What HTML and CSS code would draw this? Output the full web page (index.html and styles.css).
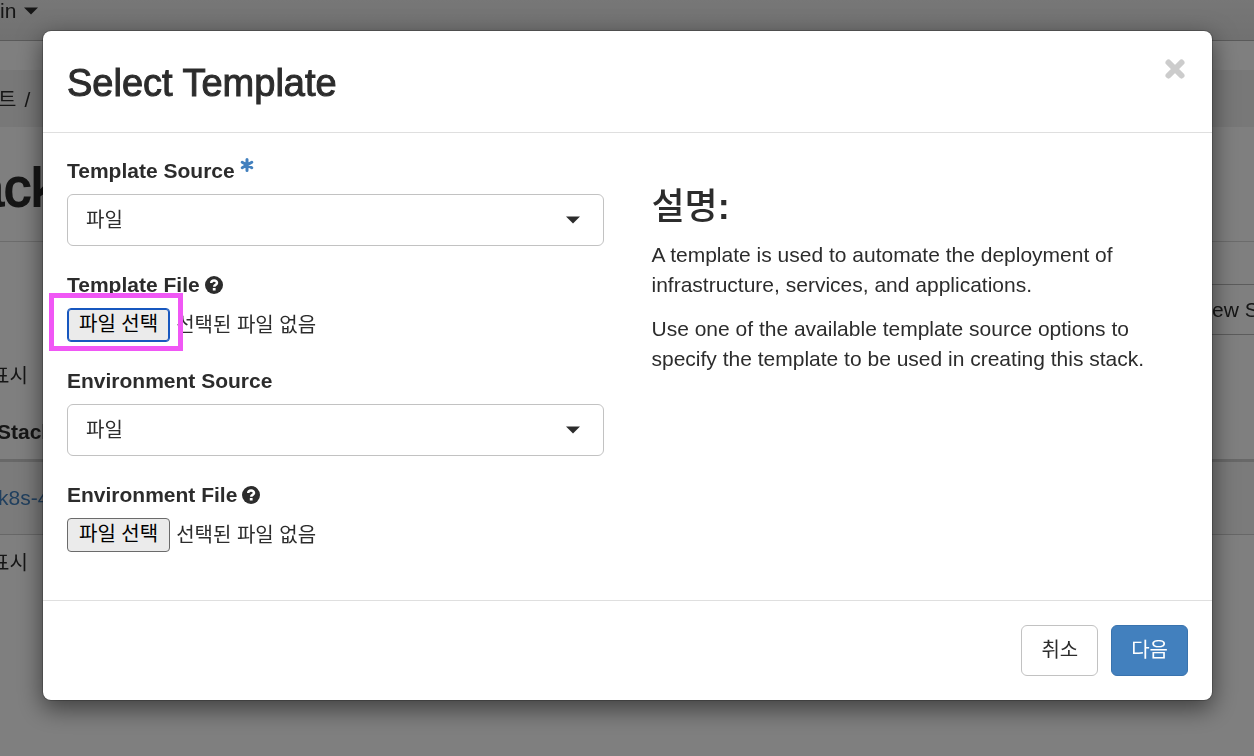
FILE: index.html
```html
<!DOCTYPE html>
<html lang="ko">
<head>
<meta charset="utf-8">
<meta name="viewport" content="width=device-width, initial-scale=1">
<title>Select Template</title>
<link rel="stylesheet" href="styles.css">
</head>
<body>
<div class="page" aria-hidden="true">
  <div class="navbar"><span>in</span><svg class="caret" viewBox="0 0 14 8"><path d="M0 .5h14L7 7.5z"/></svg></div>
  <div class="breadcrumb"><span class="ko">트</span><span>/</span></div>
  <div class="page-title">ack</div>
  <div class="toolbar"><div class="toolbar-button">ew Stack</div></div>
  <div class="count ko">표시</div>
  <div class="table-head">Stack</div>
  <div class="table-row">k8s-4</div>
  <div class="count ko">표시</div>
</div>

<div class="overlay">
  <form class="modal" role="dialog" aria-labelledby="modal-title">
    <header class="modal-header">
      <h1 id="modal-title" class="modal-title">Select Template</h1>
      <button class="close" type="button" aria-label="닫기">
        <svg viewBox="0 0 22 22"><path d="M4.500 4.500l13 13M17.500 4.500l-13 13"/></svg>
      </button>
    </header>

    <div class="modal-body">
      <div class="fields">
        <div class="field">
          <label class="label" for="template-source">Template Source
            <svg class="required" viewBox="0 0 14 14"><path d="M7 1.500v11M2.200 4.200l9.600 5.600M11.800 4.200L2.200 9.800"/></svg>
          </label>
          <div class="select">
            <select id="template-source" class="select-input"><option>파일</option></select>
            <svg class="caret" viewBox="0 0 14 8"><path d="M0 .5h14L7 7.500z"/></svg>
          </div>
        </div>
        <div class="field">
          <label class="label" for="template-file">Template File
            <svg class="help" viewBox="0 0 18 18"><circle cx="9" cy="9" r="9"/><path d="M6.200 7c.2-3.400 5.900-3.200 5.800 0 0 2-2.800 1.800-2.800 3.700"/><rect x="7.800" y="12" width="2.800" height="2.500"/></svg>
          </label>
          <div class="file">
            <input id="template-file" class="file-input" type="file">
            <label class="file-button file-button-active" for="template-file">파일 선택<span class="highlight"></span></label>
            <span>선택된 파일 없음</span>
          </div>
        </div>
        <div class="field">
          <label class="label" for="environment-source">Environment Source</label>
          <div class="select">
            <select id="environment-source" class="select-input"><option>파일</option></select>
            <svg class="caret" viewBox="0 0 14 8"><path d="M0 .5h14L7 7.500z"/></svg>
          </div>
        </div>
        <div class="field">
          <label class="label" for="environment-file">Environment File
            <svg class="help" viewBox="0 0 18 18"><circle cx="9" cy="9" r="9"/><path d="M6.200 7c.2-3.400 5.900-3.200 5.800 0 0 2-2.800 1.800-2.800 3.700"/><rect x="7.800" y="12" width="2.800" height="2.500"/></svg>
          </label>
          <div class="file">
            <input id="environment-file" class="file-input" type="file">
            <label class="file-button" for="environment-file">파일 선택</label>
            <span>선택된 파일 없음</span>
          </div>
        </div>
      </div>

      <div class="description">
        <h2 class="description-title">설명<b>:</b></h2>
        <p>A template is used to automate the deployment of infrastructure, services, and applications.</p>
        <p>Use one of the available template source options to specify the template to be used in creating this stack.</p>
      </div>
    </div>

    <footer class="modal-footer">
      <button class="button" type="button">취소</button>
      <button class="button button-primary" type="submit">다음</button>
    </footer>
  </form>
</div>
</body>
</html>
```
FILE: styles.css
```css
* { box-sizing: border-box; }

body {
  margin: 0;
  min-height: 100vh;
  overflow: hidden;
  background: #fff;
  color: #2c2c2c;
  font: 21px/30px "Liberation Sans", "Noto Sans CJK KR", sans-serif;
}

.ko { font-size: 20px; }

.caret { width: 14px; height: 8px; fill: currentColor; }

/* Page behind the dialog */
.page { position: fixed; inset: 0; overflow: hidden; }
.navbar {
  display: flex;
  align-items: center;
  gap: 8px;
  height: 41px;
  padding-bottom: 18px;
  background: linear-gradient(#eeeeee, #e2e2e2);
  border-bottom: 1px solid #b4b4b4;
}
.breadcrumb {
  display: flex;
  align-items: center;
  gap: 8px;
  height: 57px;
  padding-top: 2px;
  margin-top: 29px;
  margin-left: -2px;
  background: #f1f1f1;
}
.page-title {
  height: 115px;
  padding-top: 30px;
  margin-left: -26px;
  border-bottom: 1px solid #d8d8d8;
  font-size: 54px;
  line-height: 60px;
  -webkit-text-stroke: 2px currentColor;
}
.toolbar { display: flex; justify-content: flex-end; margin-top: 42px; }
.toolbar-button {
  width: 80px;
  height: 51px;
  margin-right: -37px;
  padding-top: 10px;
  border: 1px solid #b8b8b8;
  white-space: nowrap;
}
.count { margin-left: -9px; height: 82px; padding-top: 26px; }
.table-head {
  height: 45px;
  margin-left: -3px;
  border-bottom: 3px solid #d0d0d0;
  font-weight: bold;
}
.table-row {
  height: 73px;
  padding-top: 21px;
  margin-left: -2px;
  border-bottom: 1px solid #cfcfcf;
  background: #f6f6f6;
  color: #4280be;
}
.table-row + .count { padding-top: 13px; }

/* Dialog */
.overlay {
  position: fixed;
  inset: 0;
  padding: 30px 41px 0 42px;
  overflow: auto;
  background: rgba(0, 0, 0, .5);
}
.modal {
  border: 1px solid rgba(0, 0, 0, .2);
  border-radius: 9px;
  background: #fff;
  background-clip: padding-box;
  box-shadow: 0 8px 24px rgba(0, 0, 0, .5);
}
.modal-header {
  display: flex;
  justify-content: space-between;
  align-items: flex-start;
  padding: 26px 24px 22px;
  border-bottom: 1px solid #dfdfdf;
}
.modal-title {
  margin: 0;
  font-size: 38px;
  line-height: 53px;
  font-weight: normal;
  -webkit-text-stroke: 1px currentColor;
}
.close {
  display: flex;
  margin: 1px 2px 0 0;
  padding: 0;
  border: 0;
  background: none;
}
.close svg { width: 22px; height: 22px; fill: none; stroke: #ccc; stroke-width: 6; stroke-linecap: round; }

.modal-body {
  display: grid;
  grid-template-columns: 1fr 1fr;
  gap: 48px;
  padding: 23px 24px 24px;
}
.field { margin-bottom: 24px; }
.label { display: flex; align-items: center; gap: 5px; margin-bottom: 8px; font-weight: bold; }
.required { width: 14px; height: 14px; margin-bottom: 12px; stroke: #4280be; stroke-width: 3; stroke-linecap: round; fill: none; }
.help { width: 18px; height: 18px; fill: #2c2c2c; }
.help path { fill: none; stroke: #fff; stroke-width: 2.5; }
.help rect { fill: #fff; }

.select { display: grid; align-items: center; }
.select > * { grid-area: 1 / 1; }
.select .caret { justify-self: end; margin-right: 24px; pointer-events: none; }
.select-input {
  appearance: none;
  width: 100%;
  height: 52px;
  padding: 0 48px 0 18px;
  border: 1px solid #c2c2c2;
  border-radius: 6px;
  background: #fff;
  color: inherit;
  font: inherit;
  font-size: 20px;
}

.file { display: flex; align-items: center; gap: 6px; font-size: 20px; }
.file-input { position: absolute; width: 1px; height: 1px; opacity: 0; }
.file-button {
  position: relative;
  height: 34px;
  padding: 0 11px;
  border: 1px solid #6b6b6b;
  border-radius: 4px;
  background: #ebebeb;
  color: #000;
}
.file-button-active { border-color: #1757bf; box-shadow: inset 0 0 0 1px #1757bf; }
.highlight {
  position: absolute;
  inset: -16px -14px -10px -19px;
  border: 5px solid #f057f5;
}

.description-title {
  margin: 31px 0 13px;
  font-size: 36px;
  line-height: 40px;
  font-weight: 500;
}
.description p { margin: 0 0 14px; }

.modal-footer {
  display: flex;
  justify-content: flex-end;
  gap: 13px;
  padding: 24px;
  border-top: 1px solid #dfdfdf;
}
.button {
  height: 51px;
  padding: 0 19px 2px;
  border: 1px solid #c2c2c2;
  border-radius: 6px;
  background: #fff;
  color: inherit;
  font: inherit;
  font-size: 20px;
}
.button-primary { border-color: #3973ae; background: #4280be; color: #fff; }
```
